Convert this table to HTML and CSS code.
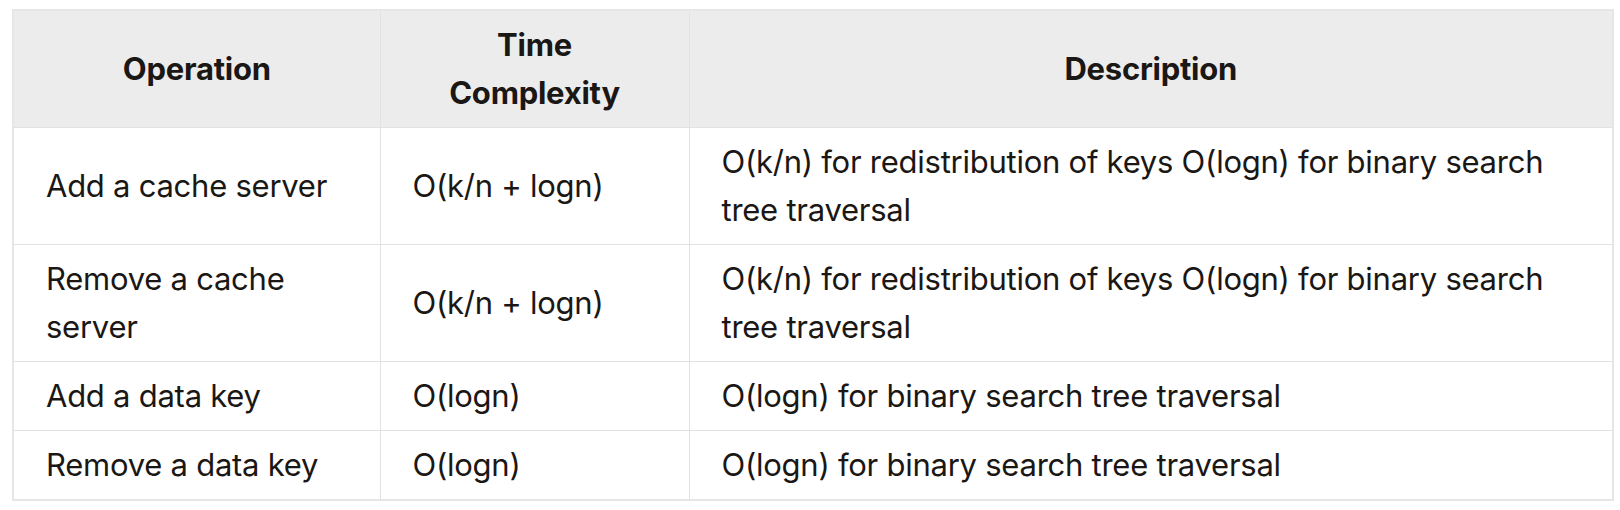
FILE: index.html
```html
<!DOCTYPE html>
<html lang="en">
<head>
<meta charset="utf-8">
<title>Consistent hashing complexity</title>
<link rel="stylesheet" href="styles.css">
</head>
<body>
<div class="wrap">
<table class="ops">
  <colgroup>
    <col class="c-op">
    <col class="c-time">
    <col class="c-desc">
  </colgroup>
  <thead>
    <tr>
      <th>Operation</th>
      <th>Time Complexity</th>
      <th>Description</th>
    </tr>
  </thead>
  <tbody>
    <tr>
      <td>Add a cache server</td>
      <td>O(k/n + logn)</td>
      <td>O(k/n) for redistribution of keys O(logn) for binary search tree traversal</td>
    </tr>
    <tr>
      <td>Remove a cache server</td>
      <td>O(k/n + logn)</td>
      <td>O(k/n) for redistribution of keys O(logn) for binary search tree traversal</td>
    </tr>
    <tr>
      <td>Add a data key</td>
      <td>O(logn)</td>
      <td>O(logn) for binary search tree traversal</td>
    </tr>
    <tr>
      <td>Remove a data key</td>
      <td>O(logn)</td>
      <td>O(logn) for binary search tree traversal</td>
    </tr>
  </tbody>
</table>
</div>
</body>
</html>
```

FILE: styles.css
```css
html, body {
  margin: 0;
  padding: 0;
  background: #ffffff;
}

.wrap {
  padding: 9px 9px 0 12px;
}

.ops {
  width: 1600px;
  table-layout: fixed;
  border-collapse: collapse;
  border: 2px solid #e6e6e6;
  font-family: Inter, "Liberation Sans", sans-serif;
  font-size: 31px;
  line-height: 48px;
  letter-spacing: -0.25px;
  color: #1a1714;
}

.c-op { width: 367px; }
.c-time { width: 309px; }
.c-desc { width: 924px; }

.ops th,
.ops td {
  border: 1px solid #e2e2e2;
  padding: 10px 32px;
  vertical-align: middle;
}

.ops th {
  background: #ececec;
  font-weight: 700;
  text-align: center;
}

.ops td {
  text-align: left;
  font-weight: 400;
}
```
